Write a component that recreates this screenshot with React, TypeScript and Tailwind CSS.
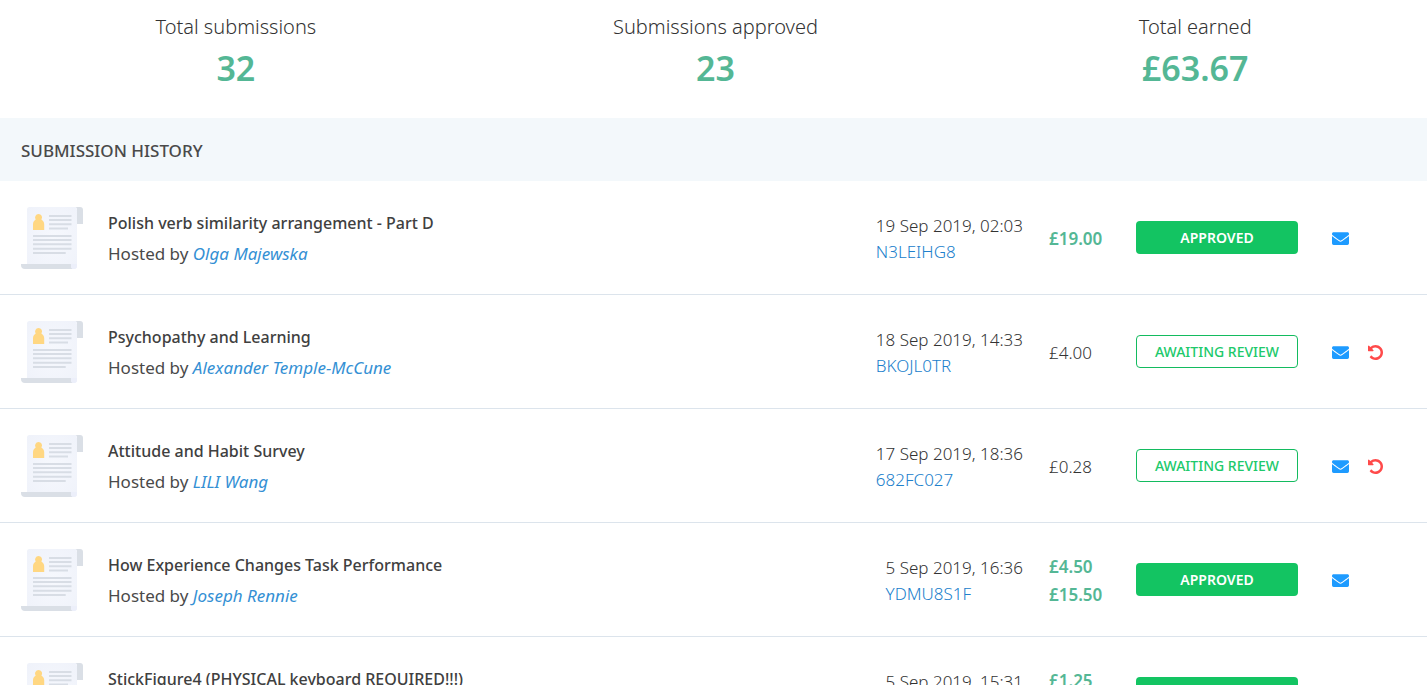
import { FaEnvelope } from "react-icons/fa";

type Status = "approved" | "awaiting";

interface Submission {
  title: string;
  host: string;
  date: string;
  code: string;
  amounts: string[];
  status: Status;
}

const stats = [
  { label: "Total submissions", value: "32" },
  { label: "Submissions approved", value: "23" },
  { label: "Total earned", value: "£63.67" },
];

const submissions: Submission[] = [
  {
    title: "Polish verb similarity arrangement - Part D",
    host: "Olga Majewska",
    date: "19 Sep 2019, 02:03",
    code: "N3LEIHG8",
    amounts: ["£19.00"],
    status: "approved",
  },
  {
    title: "Psychopathy and Learning",
    host: "Alexander Temple-McCune",
    date: "18 Sep 2019, 14:33",
    code: "BKOJL0TR",
    amounts: ["£4.00"],
    status: "awaiting",
  },
  {
    title: "Attitude and Habit Survey",
    host: "LILI Wang",
    date: "17 Sep 2019, 18:36",
    code: "682FC027",
    amounts: ["£0.28"],
    status: "awaiting",
  },
  {
    title: "How Experience Changes Task Performance",
    host: "Joseph Rennie",
    date: "5 Sep 2019, 16:36",
    code: "YDMU8S1F",
    amounts: ["£4.50", "£15.50"],
    status: "approved",
  },
  {
    title: "StickFigure4 (PHYSICAL keyboard REQUIRED!!!)",
    host: "",
    date: "5 Sep 2019, 15:31",
    code: "",
    amounts: ["£1.25", ""],
    status: "approved",
  },
];

function DocumentIcon() {
  return (
    <svg viewBox="0 0 62 62" className="block size-[62px]" aria-hidden="true">
      <defs>
        <radialGradient id="paper" cx="0.5" cy="0.5" r="0.7">
          <stop offset="0" stopColor="#f6f8fd" />
          <stop offset="1" stopColor="#eff2fa" />
        </radialGradient>
      </defs>
      <path d="M8.500 0H58a2 2 0 0 0-2 3v56a3 3 0 0 1-3 3H6V2.500A2.500 2.500 0 0 1 8.500 0Z" fill="url(#paper)" />
      <path d="M56 17V3a3 3 0 0 0-1-3h4a3 3 0 0 1 3 3v14Z" fill="#dadfe6" />
      <path d="M0 57h50v2a3 3 0 0 0 3 3H4a4 4 0 0 1-4-4Z" fill="#dadfe6" />
      <path d="M50 57h6v2a3 3 0 0 1-6 0Z" fill="#eceffa" />
      <path
        d="M17.500 7a3.500 3.500 0 0 1 2.900 5.500c1.700 1 2.800 2.700 2.800 4.800V23H12v-5.700c0-2.100 1-3.800 2.700-4.800A3.500 3.500 0 0 1 17.500 7Z"
        fill="#ffd782"
      />
      <path
        d="M28 9h22.500M28 13h22.500M28 17.200h22.500M28 21.500h19M12 29h38.500M12 33h38.500M12 37.300h38.500M12 41.700h38.500M12 46h32.700"
        stroke="#d8dde5"
        strokeWidth="2"
      />
    </svg>
  );
}

function UndoIcon() {
  return (
    <svg viewBox="0 0 1536 1536" className="block size-[15px]" fill="currentColor" aria-hidden="true">
      <path d="M1536 768q0 156-61 298t-164 245-245 164-298 61q-172 0-327-72.500T177 1259q-7-10-6.500-22.500t8.500-20.500l137-138q10-9 25-9 16 2 23 12 73 95 179 147t225 52q104 0 198.500-40.500T1130 1130t109.500-163.500T1280 768t-40.500-198.500T1130 406 966.500 296.500 768 256q-98 0-188 35.500T420 393l137 138q31 30 14 69-17 40-59 40H64q-26 0-45-19T0 576V128q0-42 40-59 39-17 69 14l130 129Q346 111 483.500 55.500T768 0q156 0 298 61t245 164 164 245 61 298Z" />
    </svg>
  );
}

function StatusButton({ status }: { status: Status }) {
  return status === "approved" ? (
    <button
      type="button"
      className="block h-[33px] w-full rounded-[4px] bg-[#13c462] text-sm font-semibold text-white"
    >
      APPROVED
    </button>
  ) : (
    <button
      type="button"
      className="block h-[33px] w-full rounded-[4px] border border-[#13bb5f] bg-white text-sm font-medium text-[#20c96b]"
    >
      AWAITING REVIEW
    </button>
  );
}

function SubmissionRow({ item }: { item: Submission }) {
  const approved = item.status === "approved";
  return (
    <tr className="h-[114px] [&>td]:border-b [&>td]:border-[#dce4ec]">
      <td className="pl-[21px]">
        <DocumentIcon />
      </td>
      <td className="pt-[2px]">
        <h3 className="text-base leading-[31px] font-medium text-[#404040]">{item.title}</h3>
        <p className="h-[30px] text-[17px] leading-[30px] text-[#4a4a4a]">
          Hosted by{" "}
          <a href="#host" className="text-[#3490d4] italic">
            {item.host}
          </a>
        </p>
      </td>
      <td className="pt-[2px]">
        <div className="ml-auto w-fit text-[17px] leading-[26px] font-light whitespace-nowrap">
          <p>{item.date}</p>
          <p className="h-[26px]">
            <a href="#submission" className="text-[#2080cc]">
              {item.code}
            </a>
          </p>
        </div>
      </td>
      <td className="pt-[2px] pl-[26px]">
        {item.amounts.map((amount, index) => (
          <p
            key={index}
            className={
              approved
                ? "h-7 text-[17px] leading-7 font-semibold text-[#54b795]"
                : "h-7 text-[17px] leading-7 font-light"
            }
          >
            {amount}
          </p>
        ))}
      </td>
      <td>
        <StatusButton status={item.status} />
      </td>
      <td className="pt-[2px] pl-[34px]">
        <div className="flex items-center gap-[19px]">
          <button type="button" aria-label="Message host" className="text-[#1e9bff]">
            <FaEnvelope className="block size-[17px]" />
          </button>
          {!approved && (
            <button type="button" aria-label="Return submission" className="text-[#ff4a4a]">
              <UndoIcon />
            </button>
          )}
        </div>
      </td>
    </tr>
  );
}

export default function App() {
  return (
    <main className="h-screen overflow-hidden bg-white font-['Noto_Sans','Open_Sans',sans-serif] text-[#333]">
      <dl className="-mr-2 -ml-1 grid grid-cols-3 pt-3 pb-6 text-center">
        {stats.map((stat) => (
          <div key={stat.label}>
            <dt className="text-[20px] leading-[30px] font-light">{stat.label}</dt>
            <dd className="text-[34px] leading-[52px] font-semibold text-[#54b795]">{stat.value}</dd>
          </div>
        ))}
      </dl>
      <h2 className="bg-[#f3f8fb] px-[21px] pt-[21px] pb-[18px] text-[17px] leading-[24px] font-medium text-[#4a4a4a]">
        SUBMISSION HISTORY
      </h2>
      <table className="w-full table-fixed border-separate border-spacing-0">
        <colgroup>
          <col className="w-[108px]" />
          <col />
          <col className="w-[160px]" />
          <col className="w-[113px]" />
          <col className="w-[162px]" />
          <col className="w-[129px]" />
        </colgroup>
        <tbody>
          {submissions.map((item) => (
            <SubmissionRow key={item.title} item={item} />
          ))}
        </tbody>
      </table>
    </main>
  );
}
